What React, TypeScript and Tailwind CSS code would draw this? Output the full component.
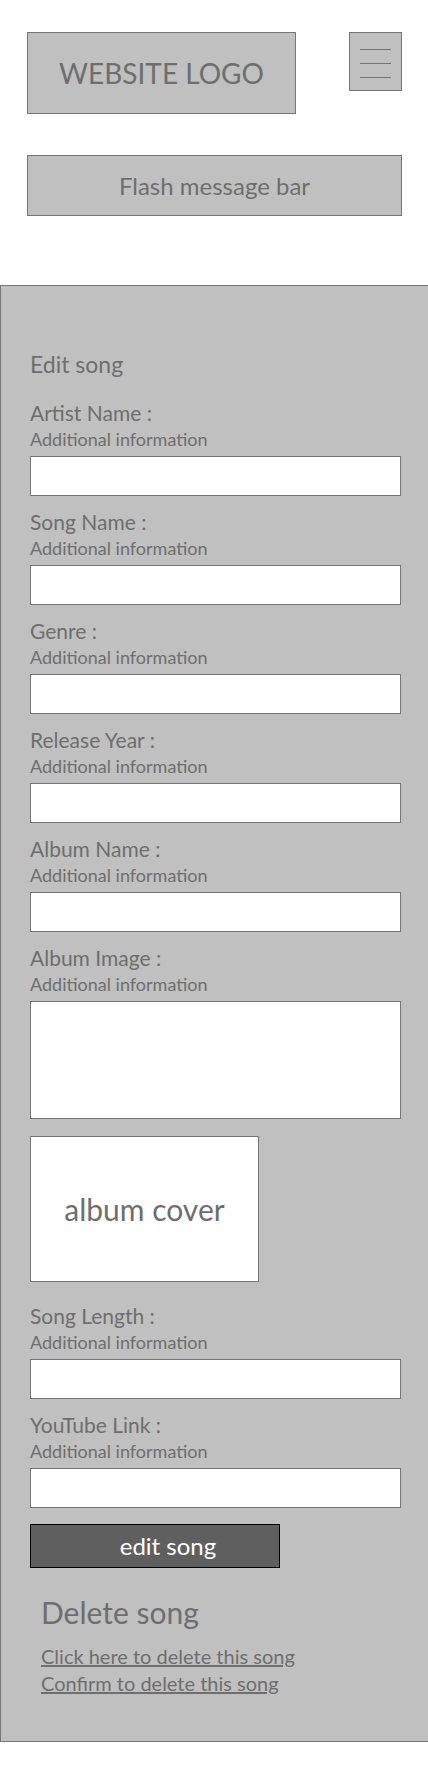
import React from 'react';

const fields = [
  'Artist Name :',
  'Song Name :',
  'Genre :',
  'Release Year :',
  'Album Name :',
];

function Field({ label, tall }: { label: string; tall?: boolean }) {
  return (
    <div className="mb-[12px]">
      <p className="text-[21px] leading-[28px]">{label}</p>
      <p className="text-[18px] leading-[24px]">Additional information</p>
      <div
        className={`mt-[5px] w-[371px] bg-white border border-[#767676] ${tall ? 'h-[118px]' : 'h-[40px]'}`}
      />
    </div>
  );
}

export default function App() {
  return (
    <div
      className="w-full min-h-[1774px] bg-white overflow-hidden text-[#6e6e6e]"
      style={{ fontFamily: 'Lato, "Open Sans", sans-serif' }}
    >
      <header className="pt-[32px] pl-[27px] pr-[26px]">
        <div className="flex items-start justify-between">
          <div className="w-[269px] h-[82px] bg-[#c0c0c0] border border-[#767676] flex items-center justify-center text-[28px]">
            WEBSITE LOGO
          </div>
          <button className="w-[53px] h-[59px] bg-[#c0c0c0] border border-[#767676] flex flex-col items-center pt-[16px] gap-[13px]">
            <span className="block w-[31px] h-px bg-[#767676]" />
            <span className="block w-[31px] h-px bg-[#767676]" />
            <span className="block w-[31px] h-px bg-[#767676]" />
          </button>
        </div>
        <div className="mt-[41px] h-[61px] bg-[#c0c0c0] border border-[#767676] flex items-center justify-center text-[24px]">
          Flash message bar
        </div>
      </header>

      <main className="mt-[69px] w-[calc(100%+2px)] bg-[#c0c0c0] border border-[#767676] pl-[29px] pt-[63px] pb-[44px]">
        <h1 className="text-[23px] leading-[30px] mb-[20px]">Edit song</h1>
        {fields.map((f) => (
          <Field key={f} label={f} />
        ))}
        <Field label="Album Image :" tall />
        {/* margins collapse with the field's mb, so this is the real gap */}
        <div className="mt-[17px] w-[229px] h-[146px] bg-white border border-[#767676] flex items-center justify-center text-[30px]">
          album cover
        </div>
        <div className="mt-[20px]">
          <Field label="Song Length :" />
          <Field label="YouTube Link :" />
        </div>
        <button className="mt-[4px] w-[250px] h-[44px] bg-[#5f5f5f] border border-black text-white text-[24px] leading-none pl-[26px]">
          edit song
        </button>
        <section className="mt-[24px] pl-[11px]">
          <h2 className="text-[30px] leading-[40px] mb-[11px]">Delete song</h2>
          <a href="#" className="block text-[20px] leading-[27px] underline">
            Click here to delete this song
          </a>
          <a href="#" className="block text-[20px] leading-[27px] underline">
            Confirm to delete this song
          </a>
        </section>
      </main>
    </div>
  );
}
